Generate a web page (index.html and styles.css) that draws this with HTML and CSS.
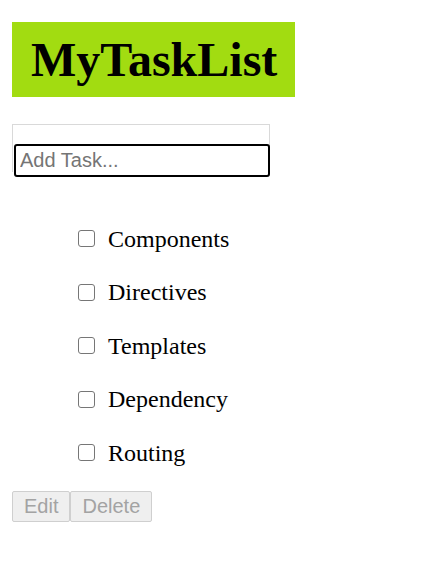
FILE: index.html
```html
<!DOCTYPE html>
<html>
<head>
<meta charset="utf-8">
<link rel="stylesheet" href="styles.css">
</head>
<body>
<h1 class="title">MyTaskList</h1>
<div class="addbox">
  <input class="addinput" type="text" placeholder="Add Task...">
</div>
<ul class="tasks">
  <li class="task"><span class="check"></span><span class="label">Components</span></li>
  <li class="task"><span class="check"></span><span class="label">Directives</span></li>
  <li class="task"><span class="check"></span><span class="label">Templates</span></li>
  <li class="task"><span class="check"></span><span class="label">Dependency</span></li>
  <li class="task"><span class="check"></span><span class="label">Routing</span></li>
</ul>
<div class="actions">
  <button class="btn" disabled>Edit</button><button class="btn" disabled>Delete</button>
</div>
</body>
</html>
```
FILE: styles.css
```css
html, body {
  margin: 0;
  background: #fff;
}
body {
  padding: 22px 12px;
  font-family: "Liberation Serif", "Times New Roman", serif;
}
.title {
  display: block;
  width: fit-content;
  margin: 0;
  height: 75px;
  line-height: 75px;
  padding: 0 18px 0 19px;
  background: #a2dc11;
  color: #000;
  font-size: 48px;
  font-weight: bold;
}
.addbox {
  box-sizing: border-box;
  margin-top: 27px;
  width: 258px;
  height: 48px;
  border: 1px solid #d9d9d9;
  border-bottom: none;
  padding-top: 19px;
}
.addinput {
  display: block;
  box-sizing: border-box;
  margin: 0 0 0 1px;
  width: 256px;
  height: 33px;
  border: 2px solid #000;
  border-radius: 3px;
  padding: 0 4px;
  font-family: "Liberation Sans", Arial, sans-serif;
  font-size: 20px;
  color: #000;
  outline: none;
}
.addinput::placeholder {
  color: #757575;
}
.tasks {
  list-style: none;
  margin: 40px 0 0 0;
  padding: 0 0 0 66px;
}
.task {
  display: flex;
  align-items: center;
  height: 53.5px;
}
.check {
  box-sizing: border-box;
  width: 17px;
  height: 17px;
  border: 1px solid #767676;
  border-radius: 3px;
  background: #fff;
  margin-right: 13px;
}
.label {
  font-size: 24px;
  color: #000;
  line-height: 1;
}
.actions {
  display: flex;
  margin-top: 11px;
}
.btn {
  box-sizing: border-box;
  height: 31px;
  padding: 0 11px;
  border: 1px solid #cfcfcf;
  border-radius: 2px;
  background: #efefef;
  color: #a3a3a3;
  font-family: "Liberation Sans", Arial, sans-serif;
  font-size: 20px;
  margin: 0;
}
```
